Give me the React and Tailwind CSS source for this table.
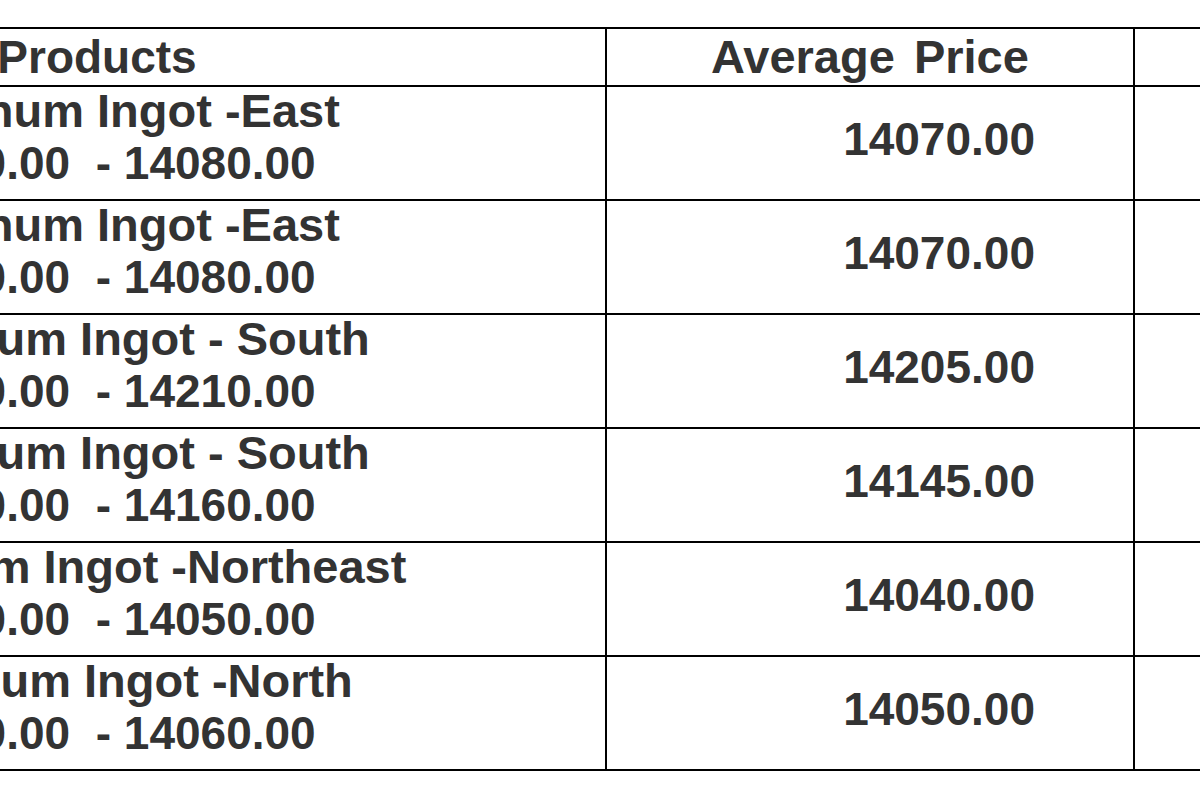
const rows = [
  { name: 'Aluminum Ingot -East', range: ['14060.00', '14080.00'], avg: '14070.00' },
  { name: 'Aluminum Ingot -East', range: ['14060.00', '14080.00'], avg: '14070.00' },
  { name: 'Aluminium Ingot - South', range: ['14200.00', '14210.00'], avg: '14205.00' },
  { name: 'Aluminium Ingot - South', range: ['14130.00', '14160.00'], avg: '14145.00' },
  { name: 'Aluminium Ingot -Northeast', range: ['14030.00', '14050.00'], avg: '14040.00' },
  { name: 'Aluminum Ingot -North', range: ['14040.00', '14060.00'], avg: '14050.00' },
]

export default function App() {
  return (
    <div className="w-[1200px] h-[800px] overflow-hidden bg-white">
      <div
        className="ml-[-411px] mt-[27px] w-max border-t-2 border-black text-[46px] font-bold text-[#333333]"
        style={{ fontFamily: '"Liberation Sans", Arial, sans-serif' }}
      >
        {/* Header */}
        <div className="grid grid-cols-[1018px_528px_200px]">
          <div className="h-[58px] border-r-2 border-b-2 border-black text-center leading-[56px]">Products</div>
          <div className="h-[58px] border-r-2 border-b-2 border-black text-center leading-[56px] text-[47px] [word-spacing:6px]">
            Average Price
          </div>
          <div className="h-[58px] border-r-2 border-b-2 border-black"></div>
        </div>

        {/* Body rows */}
        {rows.map((row, i) => (
          <div key={i} className="grid grid-cols-[1018px_528px_200px]">
            <div className="h-[114px] border-r-2 border-b-2 border-black text-center leading-[53px] whitespace-nowrap">
              <div className="-mt-[3px]">
                <div className="text-[47px]">{row.name}</div>
                <div>
                  {row.range[0]}{'\u00a0 '}- {row.range[1]}
                </div>
              </div>
            </div>
            <div className="h-[114px] border-r-2 border-b-2 border-black flex items-center justify-end pr-[98px] pb-[9px] leading-none">
              {row.avg}
            </div>
            <div className="h-[114px] border-r-2 border-b-2 border-black"></div>
          </div>
        ))}
      </div>
    </div>
  )
}
